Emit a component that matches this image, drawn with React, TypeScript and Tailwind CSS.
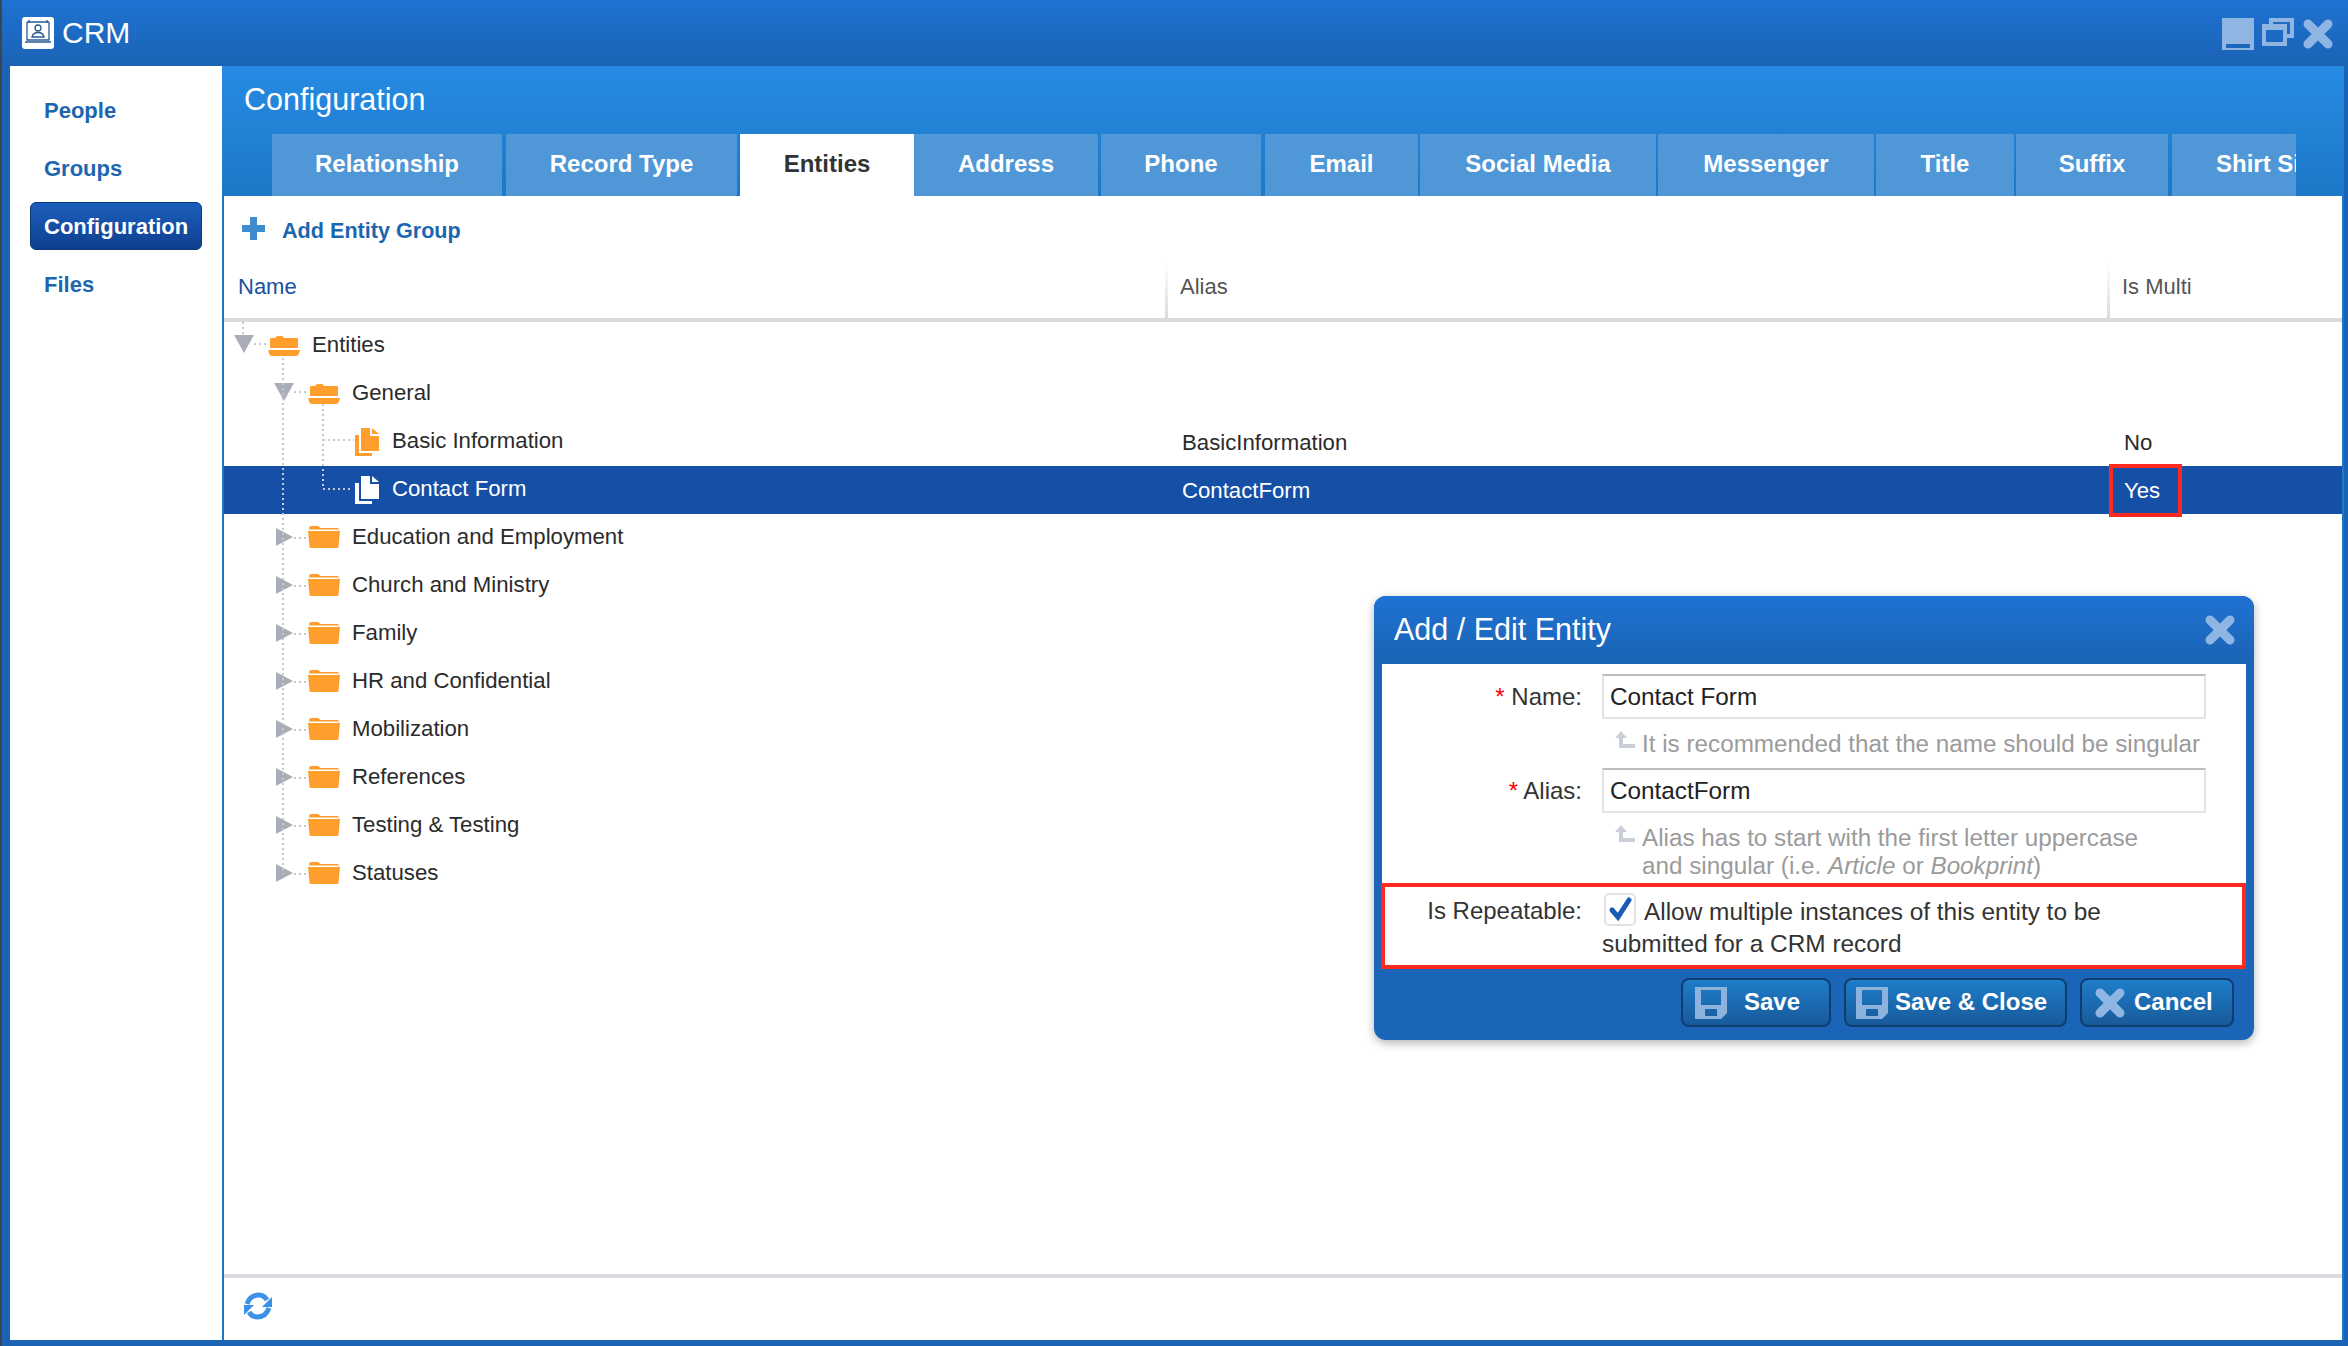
import React from "react";

const XIcon = ({ className }: { className: string }) => (
  <svg viewBox="0 0 30 30" className={className}>
    <path d="M5 5 L25 25 M25 5 L5 25" stroke="#8fb5e3" strokeWidth="9" strokeLinecap="round" fill="none" />
  </svg>
);

const SaveIcon = () => (
  <svg viewBox="0 0 32 32" className="w-[32px] h-[32px] shrink-0">
    <path fillRule="evenodd" fill="#8db3dc" d="M0 0H32V26L26 32H0Z M6 3V18H26V3Z M10 22V29H22V22Z" />
  </svg>
);

const Logo = () => (
  <svg viewBox="0 0 32 32" className="w-[32px] h-[32px] shrink-0">
    <rect width="32" height="32" rx="3" fill="#fff" />
    <path d="M5 5H27M5 5V23H27V5M3 25H29" stroke="#2a5b93" strokeWidth="1.3" fill="none" />
    <path d="M7 3V6M25 3V6" stroke="#2a5b93" strokeWidth="1.3" />
    <circle cx="16" cy="11" r="3" stroke="#2a5b93" strokeWidth="1.3" fill="none" />
    <path d="M10 20Q11 15.5 16 15.5Q21 15.5 22 20Z" stroke="#2a5b93" strokeWidth="1.3" fill="none" />
  </svg>
);

const FolderClosed = () => (
  <svg viewBox="0 0 32 22" className="w-[32px] h-[22px] shrink-0">
    <path fill="#ff9e2c" d="M1 2Q1 0 3 0H10Q11 0 12 2H30Q31 2 31 3.5H1Z" />
    <path fill="#ff9e2c" d="M0 5H32L30.5 20.5Q30.4 22 29 22H3Q1.6 22 1.5 20.5Z" />
  </svg>
);

const FolderOpen = () => (
  <svg viewBox="0 0 32 20" className="w-[32px] h-[20px] shrink-0">
    <path fill="#ff9e2c" d="M2 12V3Q2 2 3 2H7Q8 0 10 0H14Q15 0 16 2H29Q30 2 30 3V12Z" />
    <path fill="#ff9e2c" d="M0 14H32L31 17Q30.5 20 28 20H4Q1.5 20 1 17Z" />
  </svg>
);

const DocIcon = ({ color }: { color: string }) => (
  <svg viewBox="0 0 24 28" className="w-[24px] h-[28px] shrink-0 mr-[1px]">
    <path fill={color} fillRule="evenodd" d="M6 0H15V8H24V23H6Z" />
    <path fill={color} d="M17 0L24 6H17Z" />
    <path fill={color} d="M0 7H4V25H17V28H0Z" />
  </svg>
);

const Tri = ({ open }: { open: boolean }) =>
  open ? (
    <svg viewBox="0 0 20 18" className="w-[20px] h-[18px] shrink-0">
      <path d="M0 0H20L10 18Z" fill="#a9adb7" />
    </svg>
  ) : (
    <svg viewBox="0 0 20 20" className="w-[20px] h-[20px] shrink-0">
      <path d="M2 1L19 10L2 19Z" fill="#a9adb7" />
    </svg>
  );

type Row = { label: string; depth: 0 | 1 | 2; open?: boolean; alias?: string; multi?: string; selected?: boolean };

const rows: Row[] = [
  { label: "Entities", depth: 0, open: true },
  { label: "General", depth: 1, open: true },
  { label: "Basic Information", depth: 2, alias: "BasicInformation", multi: "No" },
  { label: "Contact Form", depth: 2, alias: "ContactForm", multi: "Yes", selected: true },
  { label: "Education and Employment", depth: 1 },
  { label: "Church and Ministry", depth: 1 },
  { label: "Family", depth: 1 },
  { label: "HR and Confidential", depth: 1 },
  { label: "Mobilization", depth: 1 },
  { label: "References", depth: 1 },
  { label: "Testing & Testing", depth: 1 },
  { label: "Statuses", depth: 1 },
];

const tabs = [
  { t: "Relationship", c: "w-[230px] mr-[4px] justify-center" },
  { t: "Record Type", c: "w-[231px] mr-[3px] justify-center" },
  { t: "Entities", c: "w-[174px] justify-center" },
  { t: "Address", c: "w-[184px] mr-[3px] justify-center" },
  { t: "Phone", c: "w-[160px] mr-[4px] justify-center" },
  { t: "Email", c: "w-[153px] mr-[2px] justify-center" },
  { t: "Social Media", c: "w-[236px] mr-[2px] justify-center" },
  { t: "Messenger", c: "w-[216px] mr-[2px] justify-center" },
  { t: "Title", c: "w-[138px] mr-[2px] justify-center" },
  { t: "Suffix", c: "w-[152px] mr-[4px] justify-center" },
  { t: "Shirt Size", c: "w-[200px] pl-[44px]" },
];

const TreeRow = ({ row }: { row: Row }) => {
  const pad = row.depth === 0 ? "pl-[10px]" : row.depth === 1 ? "pl-[50px]" : "pl-[90px]";
  return (
    <div className={`grid grid-cols-[941px_942px_1fr] h-[48px] items-center text-[22.2px] ${row.selected ? "bg-[#164fa6] text-white" : "text-[#2b2b2b]"}`}>
      <div className={`flex items-center ${pad}`}>
        <div className={`w-[20px] flex justify-center shrink-0 ${row.open ? "pb-[3px]" : "pb-[2px]"}`}>{row.depth < 2 && <Tri open={!!row.open} />}</div>
        <div className={`ml-[14px] w-[32px] flex justify-end shrink-0 ${row.depth === 1 && !row.open ? "pb-[2px]" : ""}`}>
          {row.depth === 2 ? <DocIcon color={row.selected ? "#ffffff" : "#ff9e2c"} /> : row.open ? <FolderOpen /> : <FolderClosed />}
        </div>
        <span className="ml-[12px] pb-[3px]">{row.label}</span>
      </div>
      <div className="pl-[17px] pt-[1px]">{row.alias}</div>
      <div className="pl-[17px] pt-[1px] relative h-full flex items-center">
        {row.multi}
        {row.selected && <div className="absolute left-[2px] top-[-2px] w-[73px] h-[53px] border-[4px] border-[#ff2a1f]" />}
      </div>
    </div>
  );
};

const TreeLines = () => {
  const centers = rows.map((_, i) => 24 + i * 48);
  return (
    <svg className="absolute left-0 top-0 pointer-events-none" width="400" height="600" fill="none" stroke="#c4c9d0" strokeWidth="2" strokeDasharray="2 3">
      <path d="M19 0V14 M30 22H44" />
      <path d={`M59 36V${centers[11]}`} />
      <path d="M70 70H84 M99 82V167H126 M99 118H130" />
      {centers.slice(4).map((c) => (
        <path key={c} d={`M70 ${c}H84`} />
      ))}
    </svg>
  );
};

const HintArrow = () => (
  <svg viewBox="0 0 20 18" className="w-[20px] h-[18px] shrink-0 mt-[1px]">
    <path d="M6 0L12 7H8V13H20V17H4V7H0Z" fill="#c9ced9" />
  </svg>
);

const Field = ({ label, value }: { label: string; value: string }) => (
  <div className="flex">
    <div className="w-[200px] text-right pt-[5px] text-[#333]">
      <span className="text-[#f00]">*</span> {label}
    </div>
    <div className="ml-[20px] w-[604px] h-[45px] border-2 border-[#e3e3e3] border-t-[#bcbcbc] pl-[6px] flex items-center text-[24.3px] text-[#222] pt-[1px]">{value}</div>
  </div>
);

const Btn = ({ w, pad, gap, icon, label }: { w: string; pad: string; gap: string; icon: React.ReactNode; label: string }) => (
  <div className={`${w} ${pad} ${gap} h-[49px] flex items-center rounded-lg border-2 border-[#0e3d6e] bg-linear-to-b from-[#1f7dc9] to-[#175a9a] font-bold text-white`}>
    {icon}
    <span className="pb-[2px]">{label}</span>
  </div>
);

const Dialog = () => (
  <div className="absolute left-[1372px] top-[596px] w-[880px] h-[444px] rounded-xl bg-[#1a65b8] shadow-[0_3px_10px_rgba(0,0,0,0.3)] flex flex-col text-[24px]">
    <div className="h-[68px] shrink-0 rounded-t-xl bg-linear-to-b from-[#1f72d2] to-[#1a63b5] flex items-center justify-between pl-[20px] pr-[19px]">
      <span className="text-[30.5px] text-white pb-[1px]">Add / Edit Entity</span>
      <XIcon className="w-[30px] h-[30px]" />
    </div>
    <div className="mx-[8px] bg-white pt-[10px] h-[219px] shrink-0">
      <Field label="Name:" value="Contact Form" />
      <div className="ml-[233px] flex gap-[7px] h-[49px] pt-[11px] text-[#9b9b9b] text-[24.25px]">
        <HintArrow />
        <span className="leading-[28px]">It is recommended that the name should be singular</span>
      </div>
      <Field label="Alias:" value="ContactForm" />
      <div className="ml-[233px] flex gap-[7px] pt-[11px] text-[#9b9b9b] text-[24.25px]">
        <HintArrow />
        <span className="leading-[28px]">
          Alias has to start with the first letter uppercase
          <br />
          and singular (i.e. <i>Article</i> or <i>Bookprint</i>)
        </span>
      </div>
    </div>
    <div className="ml-[7px] mr-[8px] h-[86px] bg-white border-[4px] border-[#ff2a1f] flex pt-[4px] text-[#333] shrink-0">
      <div className="w-[197px] text-right pt-[2px]">Is Repeatable:</div>
      <div className="ml-[20px] w-[590px] leading-[32px] text-[24.4px]">
        <span className="inline-block align-top w-[32px] h-[33px] mt-[2px] ml-[2px] mr-[8px] border-2 border-[#e2e2e2] rounded-[5px] bg-white">
          <svg viewBox="0 0 28 29" className="w-[28px] h-[29px]">
            <path d="M6 15L12 22L23 5" stroke="#1a5cb4" strokeWidth="5" strokeLinecap="round" fill="none" />
          </svg>
        </span>
        <span className="relative top-[5px]">Allow multiple instances of this entity to be</span>
        <br />
        <span className="relative top-[2px]">submitted for a CRM record</span>
      </div>
    </div>
    <div className="flex justify-end gap-[13px] pr-[20px] pt-[9px]">
      <Btn w="w-[150px]" pad="pl-[12px]" gap="gap-[17px]" icon={<SaveIcon />} label="Save" />
      <Btn w="w-[223px]" pad="pl-[10px]" gap="gap-[7px]" icon={<SaveIcon />} label="Save & Close" />
      <Btn w="w-[154px]" pad="pl-[13px]" gap="gap-[9px]" icon={<XIcon className="w-[30px] h-[30px] shrink-0" />} label="Cancel" />
    </div>
  </div>
);

export default function App() {
  return (
    <div className="relative w-[2348px] h-[1346px] overflow-hidden bg-[#1a63b5] font-['Liberation_Sans',Arial,sans-serif] flex flex-col border-l-[2px] border-[#3b4654]">
      {/* title bar */}
      <div className="h-[66px] shrink-0 -ml-[2px] bg-linear-to-b from-[#1f72d2] to-[#1a63b5] flex items-center pl-[22px] pr-[15px]">
        <Logo />
        <span className="ml-[8px] pb-[2px] text-[30px] text-white">CRM</span>
        <div className="ml-auto flex items-start gap-[8px] h-[32px] mt-[2px]">
          <svg viewBox="0 0 32 32" className="w-[32px] h-[32px]">
            <path fillRule="evenodd" fill="#8fb5e3" d="M0 0H32V32H0Z M4 26V30H28V26Z" />
          </svg>
          <svg viewBox="0 0 32 28" className="w-[32px] h-[28px]">
            <path fillRule="evenodd" fill="#8fb5e3" d="M7 0H32V20H25V28H0V6H7Z M11 4V6H25V16H28V4Z M4 12V24H21V12Z" />
          </svg>
          <XIcon className="w-[30px] h-[30px] ml-[1px] mt-[1px]" />
        </div>
      </div>

      <div className="flex-1 min-h-0 flex pl-[8px] pb-[6px]">
        {/* sidebar */}
        <nav className="w-[212px] shrink-0 bg-white pt-[20px] px-[20px] flex flex-col gap-[10px] text-[22px] font-bold text-[#1c66b0]">
          <div className="h-[48px] pl-[14px] flex items-center">People</div>
          <div className="h-[48px] pl-[14px] flex items-center">Groups</div>
          <div className="h-[48px] pl-[13px] flex items-center text-white rounded-md border border-[#0c3a78] bg-linear-to-b from-[#1b5fbc] to-[#0f3f90]">Configuration</div>
          <div className="h-[48px] pl-[14px] flex items-center">Files</div>
        </nav>

        {/* main */}
        <main className="w-[2122px] shrink-0 flex flex-col bg-[#1c78c8]">
          <div className="h-[130px] shrink-0 bg-linear-to-b from-[#268be3] to-[#1c78c8] flex flex-col">
            <div className="h-[68px] pl-[22px] flex items-center text-[30.5px] text-white">Configuration</div>
            <div className="ml-[50px] w-[2024px] h-[62px] flex overflow-hidden">
              {tabs.map(({ t, c }) => (
                <div
                  key={t}
                  className={`h-full pb-[2px] flex items-center shrink-0 text-[24px] font-bold whitespace-nowrap ${c} ${t === "Entities" ? "bg-white text-[#333]" : "bg-[#4f97d7] text-white"}`}
                >
                  {t}
                </div>
              ))}
            </div>
          </div>

          <div className="flex-1 min-h-0 ml-[2px] mr-[2px] bg-white flex flex-col">
            <div className="h-[66px] shrink-0 pl-[18px] pt-[21px] flex items-start gap-[17px] text-[21.6px] font-bold text-[#1c66b0]">
              <svg viewBox="0 0 23 23" className="w-[23px] h-[23px] shrink-0">
                <path d="M8 0H15V8H23V15H15V23H8V15H0V8H8Z" fill="#3f8bd0" />
              </svg>
              <span className="leading-[25px] pt-[1px]">Add Entity Group</span>
            </div>
            <div className="h-[60px] shrink-0 grid grid-cols-[941px_942px_1fr] border-b-[4px] border-[#d8dce0] text-[22px] text-[#555]">
              <div className="pl-[14px] flex items-center text-[#1a50a0] pb-[8px]">Name</div>
              <div className="relative pl-[15px] flex items-center pb-[8px]">
                <div className="absolute left-0 top-0 bottom-0 w-[3px] bg-linear-to-b from-white to-[#d8dce0]" />
                Alias
              </div>
              <div className="relative pl-[15px] flex items-center pb-[8px]">
                <div className="absolute left-0 top-0 bottom-0 w-[3px] bg-linear-to-b from-white to-[#d8dce0]" />
                Is Multi
              </div>
            </div>
            <div className="relative flex-1 min-h-0">
              {rows.map((r) => (
                <TreeRow key={r.label} row={r} />
              ))}
              <TreeLines />
            </div>
            <div className="h-[66px] shrink-0 border-t-[4px] border-[#d8dce0] pl-[19px] pt-[14px]">
              <svg viewBox="0 0 30 28" className="w-[30px] h-[28px]" fill="none">
                <path d="M4 12Q7 3 16 3Q21 3 24 8" stroke="#3d90e8" strokeWidth="5" />
                <path d="M29 5V15H19Z" fill="#3d90e8" />
                <path d="M26 16Q23 25 14 25Q9 25 6 20" stroke="#3d90e8" strokeWidth="5" />
                <path d="M1 23V13H11Z" fill="#3d90e8" />
              </svg>
            </div>
          </div>
        </main>
      </div>

      <Dialog />
    </div>
  );
}
